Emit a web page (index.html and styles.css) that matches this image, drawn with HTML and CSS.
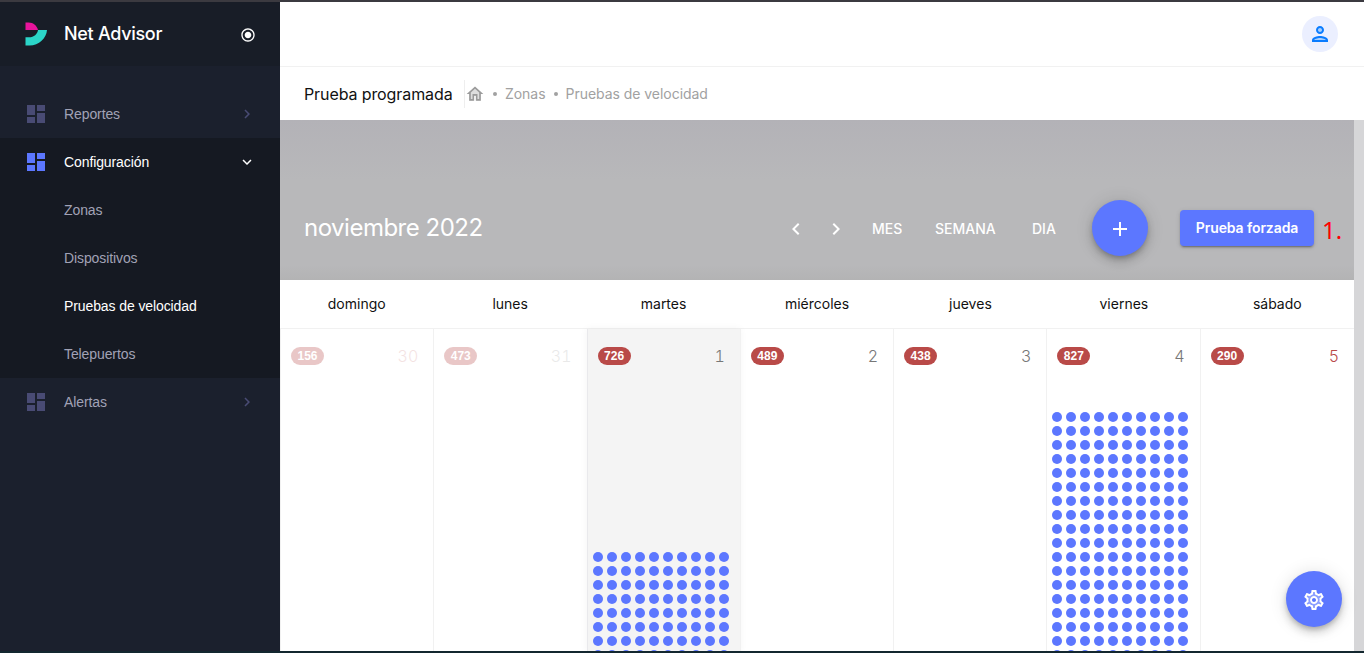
FILE: index.html
```html
<!DOCTYPE html>
<html lang="es">
<head>
<meta charset="utf-8">
<meta name="viewport" content="width=device-width, initial-scale=1.0">

<title>Net Advisor</title>

<link rel="stylesheet" href="styles.css">

<script type="text/javascript">

// one dot per scheduled test, ten in each line
function fillDots () {
	var boxes = document.querySelectorAll('.dots');
	for (var i = 0; i < boxes.length; i++) {
		for (var n = 0; n < boxes[i].dataset.rows * 10; n++) {
			boxes[i].appendChild(document.createElement('i'));
		}
	}
}

</script>
</head>
<body onload="fillDots()">

<svg class="defs" width="0" height="0">
	<symbol id="dashboard" viewBox="0 0 24 24"><path d="M3 13h8V3H3v10zm0 8h8v-6H3v6zm10 0h8V11h-8v10zm0-18v6h8V3h-8z"/></symbol>
	<symbol id="right" viewBox="0 0 24 24"><path d="M10 6L8.59 7.41 13.17 12l-4.58 4.59L10 18l6-6z"/></symbol>
	<symbol id="left" viewBox="0 0 24 24"><path d="M15.41 7.41L14 6l-6 6 6 6 1.41-1.41L10.83 12z"/></symbol>
	<symbol id="down" viewBox="0 0 24 24"><path d="M16.59 8.59L12 13.17 7.41 8.59 6 10l6 6 6-6z"/></symbol>
</svg>

<div class="app">
	<aside class="sidebar">
		<div class="brand">
			<svg class="logo" width="24" height="26" viewBox="0 0 24 26">
				<path fill="#e8149b" d="M1.500 1.500h3C9.500 1.500 13 5 14 9H1.500z"/>
				<path fill="#2bd5c8" d="M14 9h9C22.500 17 15 24.500 5.500 24.500h-4v-8.200H5C10 16.300 13.500 13 14 9z"/>
			</svg>
			<span class="brand-name">Net Advisor</span>
			<svg class="pin" width="16" height="16" viewBox="0 0 24 24"><path d="M12 7c-2.760 0-5 2.240-5 5s2.240 5 5 5 5-2.240 5-5-2.240-5-5-5zm0-5C6.480 2 2 6.480 2 12s4.480 10 10 10 10-4.480 10-10S17.520 2 12 2zm0 18c-4.420 0-8-3.580-8-8s3.580-8 8-8 8 3.580 8 8-3.580 8-8 8z"/></svg>
		</div>
		<nav class="menu">
			<a class="item"><svg class="icon"><use href="#dashboard"/></svg><span>Reportes</span><svg class="arrow"><use href="#right"/></svg></a>
			<div class="group">
				<a class="item open"><svg class="icon"><use href="#dashboard"/></svg><span>Configuración</span><svg class="arrow"><use href="#down"/></svg></a>
				<a class="item sub"><span>Zonas</span></a>
				<a class="item sub"><span>Dispositivos</span></a>
				<a class="item sub active"><span>Pruebas de velocidad</span></a>
				<a class="item sub"><span>Telepuertos</span></a>
			</div>
			<a class="item"><svg class="icon"><use href="#dashboard"/></svg><span>Alertas</span><svg class="arrow"><use href="#right"/></svg></a>
		</nav>
	</aside>

	<div class="content">
		<header class="toolbar">
			<div class="user">
				<svg width="24" height="24" viewBox="0 0 24 24">
					<circle cx="12" cy="8" r="3" fill="#a9cffc"/>
					<path d="M5 18c0-2 4-3 7-3s7 1 7 3z" fill="#a9cffc"/>
					<path fill="#0a7cff" d="M12 6c1.100 0 2 .9 2 2s-.9 2-2 2-2-.9-2-2 .9-2 2-2m0 10c2.700 0 5.800 1.290 6 2H6c.23-.72 3.310-2 6-2m0-12C9.790 4 8 5.790 8 8s1.790 4 4 4 4-1.790 4-4-1.790-4-4-4zm0 10c-2.670 0-8 1.340-8 4v2h16v-2c0-2.660-5.330-4-8-4z"/>
				</svg>
			</div>
		</header>

		<div class="crumbs">
			<h1>Prueba programada</h1>
			<div class="trail">
				<svg width="20" height="20" viewBox="0 0 24 24">
					<path fill="#dedede" d="M12 3.500L5 10v10h5v-6h4v6h5V10z"/>
					<path fill="#9b9b9b" d="M12 5.690l5 4.500V18h-2v-6H9v6H7v-7.810l5-4.500M12 3L2 12h3v8h6v-6h2v6h6v-8h3L12 3z"/>
				</svg>
				<b></b><span>Zonas</span><b></b><span>Pruebas de velocidad</span>
			</div>
		</div>

		<div class="scroller">
			<main class="calendar">
				<div class="head">
					<h2>noviembre 2022</h2>
					<svg class="nav"><use href="#left"/></svg>
					<svg class="nav next"><use href="#right"/></svg>
					<span class="view mes">MES</span>
					<span class="view semana">SEMANA</span>
					<span class="view dia">DIA</span>
					<button class="fab"><svg width="24" height="24" viewBox="0 0 24 24"><path d="M19 14h-6v6h-2v-6H5v-2h6V6h2v6h6v2z"/></svg></button>
					<button class="forced">Prueba forzada</button>
					<span class="note">1.</span>
				</div>
				<div class="days">
					<span>domingo</span><span>lunes</span><span>martes</span><span>miércoles</span><span>jueves</span><span>viernes</span><span>sábado</span>
				</div>
				<div class="week">
					<div class="cell out weekend"><div class="top"><em>156</em><span>30</span></div></div>
					<div class="cell out"><div class="top"><em>473</em><span>31</span></div></div>
					<div class="cell today"><div class="top"><em>726</em><span>1</span></div><div class="dots late" data-rows="8"></div></div>
					<div class="cell"><div class="top"><em>489</em><span>2</span></div></div>
					<div class="cell"><div class="top"><em>438</em><span>3</span></div></div>
					<div class="cell"><div class="top"><em>827</em><span>4</span></div><div class="dots" data-rows="18"></div></div>
					<div class="cell weekend"><div class="top"><em>290</em><span>5</span></div></div>
				</div>
			</main>
		</div>
	</div>
</div>

<button class="fab settings">
	<svg width="24" height="24" viewBox="0 0 24 24">
		<path opacity=".3" d="M19.280 8.600l-.7-1.210-1.270.51-1.060.43-.91-.7c-.39-.3-.8-.54-1.230-.71l-1.060-.43-.16-1.130L12.700 4h-1.400l-.19 1.350-.16 1.130-1.060.44c-.41.17-.82.41-1.250.73l-.9.680-1.050-.42-1.270-.52-.7 1.210 1.080.84.890.7-.14 1.130c-.03.3-.05.530-.05.730s.02.430.05.730l.14 1.130-.89.700-1.080.84.7 1.210 1.270-.51 1.060-.43.910.7c.39.3.8.54 1.230.71l1.060.43.16 1.130.19 1.360h1.390l.19-1.350.16-1.130 1.060-.43c.41-.17.82-.41 1.250-.73l.9-.68 1.040.42 1.270.51.7-1.210-1.080-.84-.89-.7.140-1.130c.04-.31.05-.52.05-.73 0-.21-.02-.43-.05-.73l-.14-1.130.89-.7 1.100-.84zM12 16c-2.210 0-4-1.790-4-4s1.790-4 4-4 4 1.790 4 4-1.790 4-4 4z"/>
		<path d="M19.430 12.980c.04-.32.07-.64.07-.98 0-.34-.03-.66-.07-.98l2.110-1.650c.19-.15.24-.42.12-.64l-2-3.460c-.09-.16-.26-.25-.44-.25-.06 0-.12.01-.17.030l-2.490 1c-.52-.4-1.080-.73-1.690-.98l-.38-2.650C14.460 2.180 14.250 2 14 2h-4c-.25 0-.46.180-.49.420l-.38 2.650c-.61.25-1.170.59-1.690.98l-2.490-1c-.06-.02-.12-.03-.18-.03-.17 0-.34.09-.43.250l-2 3.460c-.13.22-.07.490.12.640l2.110 1.650c-.04.320-.07.650-.07.980s.03.660.07.980l-2.110 1.650c-.19.150-.24.420-.12.640l2 3.460c.09.160.26.250.44.250.06 0 .12-.01.170-.03l2.490-1c.52.400 1.080.730 1.690.980l.38 2.650c.03.240.24.420.49.420h4c.25 0 .46-.18.490-.42l.38-2.650c.61-.25 1.170-.59 1.690-.98l2.490 1c.06.020.12.030.18.030.17 0 .34-.09.430-.25l2-3.460c.12-.22.07-.49-.12-.64l-2.110-1.650zm-1.980-1.710c.04.310.05.520.05.730 0 .21-.02.430-.05.730l-.14 1.130.89.700 1.080.840-.7 1.210-1.270-.51-1.040-.42-.9.680c-.43.320-.84.560-1.250.730l-1.060.430-.16 1.130-.2 1.350h-1.400l-.19-1.350-.16-1.130-1.060-.43c-.43-.18-.83-.41-1.230-.71l-.91-.7-1.060.430-1.270.510-.7-1.210 1.080-.84.890-.7-.14-1.130c-.03-.31-.05-.54-.05-.74s.02-.43.050-.73l.14-1.130-.89-.7-1.080-.84.7-1.210 1.270.510 1.040.420.900-.68c.43-.32.84-.56 1.250-.73l1.060-.43.160-1.130.2-1.350h1.390l.19 1.350.16 1.130 1.060.430c.43.180.83.410 1.230.710l.91.700 1.060-.43 1.270-.51.700 1.210-1.070.850-.89.700.14 1.130zM12 8c-2.210 0-4 1.790-4 4s1.790 4 4 4 4-1.790 4-4-1.790-4-4-4zm0 6c-1.100 0-2-.9-2-2s.9-2 2-2 2 .9 2 2-.9 2-2 2z"/>
	</svg>
</button>

</body>
</html>
```
FILE: styles.css
```css
* {
	box-sizing: border-box;
}

body {
	margin: 0;
	height: 653px;
	font-family: Inter, sans-serif;
	overflow: hidden;
	background: #fff;
}

.defs {
	position: absolute;
}

.app {
	display: flex;
	height: 653px;
	border-top: 2px solid #3b3a40;
	border-bottom: 2px solid #13272f;
}

/* sidebar */

.sidebar {
	width: 280px;
	background: #1b202d;
	color: #a1a2b6;
	font: 14px/48px "Liberation Sans", Arial, sans-serif;
}

.brand {
	display: flex;
	align-items: center;
	height: 64px;
	padding: 0 24px;
	background: #181d27;
	color: #fff;
}

.brand-name {
	flex: 1;
	margin-left: 16px;
	font: 500 18px/64px Inter, sans-serif;
	letter-spacing: -0.3px;
}

.pin {
	margin-top: 2px;
	fill: #fff;
}

.menu {
	padding-top: 24px;
}

.item {
	display: flex;
	align-items: center;
	height: 48px;
	padding: 0 24px;
}

.item span {
	flex: 1;
	letter-spacing: -0.1px;
}

.icon {
	width: 24px;
	height: 24px;
	margin-right: 16px;
	fill: #494b74;
}

.arrow {
	width: 18px;
	height: 18px;
	fill: #494b74;
}

.group {
	background: #151922;
}

.sub {
	padding-left: 64px;
}

.open, .active {
	color: #fff;
}

.open .icon {
	fill: #5c77ff;
}

.open .arrow {
	fill: #fff;
}

/* top */

.content {
	flex: 1;
	display: flex;
	flex-direction: column;
	min-width: 0;
}

.toolbar {
	display: flex;
	justify-content: flex-end;
	align-items: center;
	height: 65px;
	padding-right: 26px;
	border-bottom: 1px solid #f1f1f1;
}

.user {
	display: flex;
	align-items: center;
	justify-content: center;
	width: 36px;
	height: 36px;
	border-radius: 50%;
	background: #ebefff;
}

.crumbs {
	display: flex;
	align-items: center;
	height: 53px;
	padding-left: 24px;
}

.crumbs h1 {
	width: 148px;
	margin: 0 12px 0 0;
	font-size: 16px;
	font-weight: 400;
	letter-spacing: -0.1px;
	white-space: nowrap;
	color: #111;
}

.trail {
	display: flex;
	align-items: center;
	height: 28px;
	border-left: 1px solid #eee;
	font-size: 14px;
	letter-spacing: -0.04px;
	color: #a1a1a1;
}

.trail b {
	width: 4px;
	height: 4px;
	margin: 0 8px;
	border-radius: 50%;
	background: #a1a1a1;
}

/* calendar */

.scroller {
	flex: 1;
	min-height: 0;
	padding-right: 10px;
	background: #d6d6d8;
	overflow: hidden;
}

.calendar {
	background: #fff;
}

.head {
	display: flex;
	align-items: center;
	height: 160px;
	padding: 56px 0 0 24px;
	background: linear-gradient(#b3b2b7, #b8b8ba 60px, #b8b8ba 145px, #b3b3b4);
	color: #fff;
}

.head h2 {
	width: 480px;
	margin: 0 0 2px;
	font-size: 24px;
	font-weight: 400;
	letter-spacing: -0.5px;
}

.nav {
	width: 24px;
	height: 24px;
	margin-top: 2px;
	fill: #fff;
}

.next {
	margin-left: 16px;
}

.view {
	font-size: 14px;
	font-weight: 500;
}

.mes {
	width: 63px;
	margin-left: 24px;
}

.semana {
	width: 97px;
}

.dia {
	width: 60px;
}

.fab {
	display: flex;
	align-items: center;
	justify-content: center;
	width: 56px;
	height: 56px;
	padding: 0;
	border: 0;
	border-radius: 50%;
	background: #5c77ff;
	fill: #fff;
	box-shadow: 0 3px 5px -1px rgba(0,0,0,.2), 0 6px 10px 0 rgba(0,0,0,.14), 0 1px 18px 0 rgba(0,0,0,.12);
}

.forced {
	width: 134px;
	height: 36px;
	margin-left: 32px;
	padding: 0 0 1px;
	border: 0;
	border-radius: 4px;
	background: #5c77ff;
	color: #fff;
	font: 600 14px Inter, sans-serif;
	letter-spacing: -0.1px;
	box-shadow: 0 3px 1px -2px rgba(0,0,0,.2), 0 2px 2px 0 rgba(0,0,0,.14), 0 1px 5px 0 rgba(0,0,0,.12);
}

.note {
	margin: 2px 0 0 8px;
	font: 24px "Noto Sans", sans-serif;
	color: #f00;
}

.days, .week {
	display: grid;
	grid-template-columns: repeat(7, 1fr);
}

.days {
	height: 48px;
	font-size: 14px;
	line-height: 48px;
	text-align: center;
	color: #111;
}

.week {
	grid-template-columns: repeat(6, 153.28px) 1fr;
	height: 323px;
	border-top: 1px solid #f1f1f1;
}

.cell {
	height: 323px;
	border-left: 1px solid #f1f1f1;
	overflow: hidden;
}

.today {
	background: #f4f4f4;
	border-color: #e9e9ec;
	box-shadow: 0 0 8px rgba(0,0,0,.05);
}

.top {
	display: flex;
	align-items: center;
	justify-content: space-between;
	height: 18px;
	margin: 18px 15px 0 10px;
}

.top em {
	padding: 0 6.5px;
	border-radius: 9px;
	background: #b94a48;
	color: #fff;
	font: bold 12px/18px "Liberation Sans", Arial, sans-serif;
}

.top span {
	font-size: 16px;
	font-weight: 300;
	font-variant-numeric: tabular-nums;
	color: #777;
}

.weekend .top span {
	color: #b94a48;
}

.out .top {
	opacity: .3;
}

.out .top span {
	opacity: .5;
}

.dots {
	display: grid;
	grid-template-columns: repeat(10, 10px);
	gap: 4px;
	margin: 47px 0 0 5px;
}

.late {
	margin-top: 187px;
}

.dots i {
	height: 10px;
	border-radius: 50%;
	background: #5c77ff;
}

/* stays over the calendar */
.settings {
	position: fixed;
	right: 22px;
	bottom: 26px;
	padding-top: 1px;
}
```
